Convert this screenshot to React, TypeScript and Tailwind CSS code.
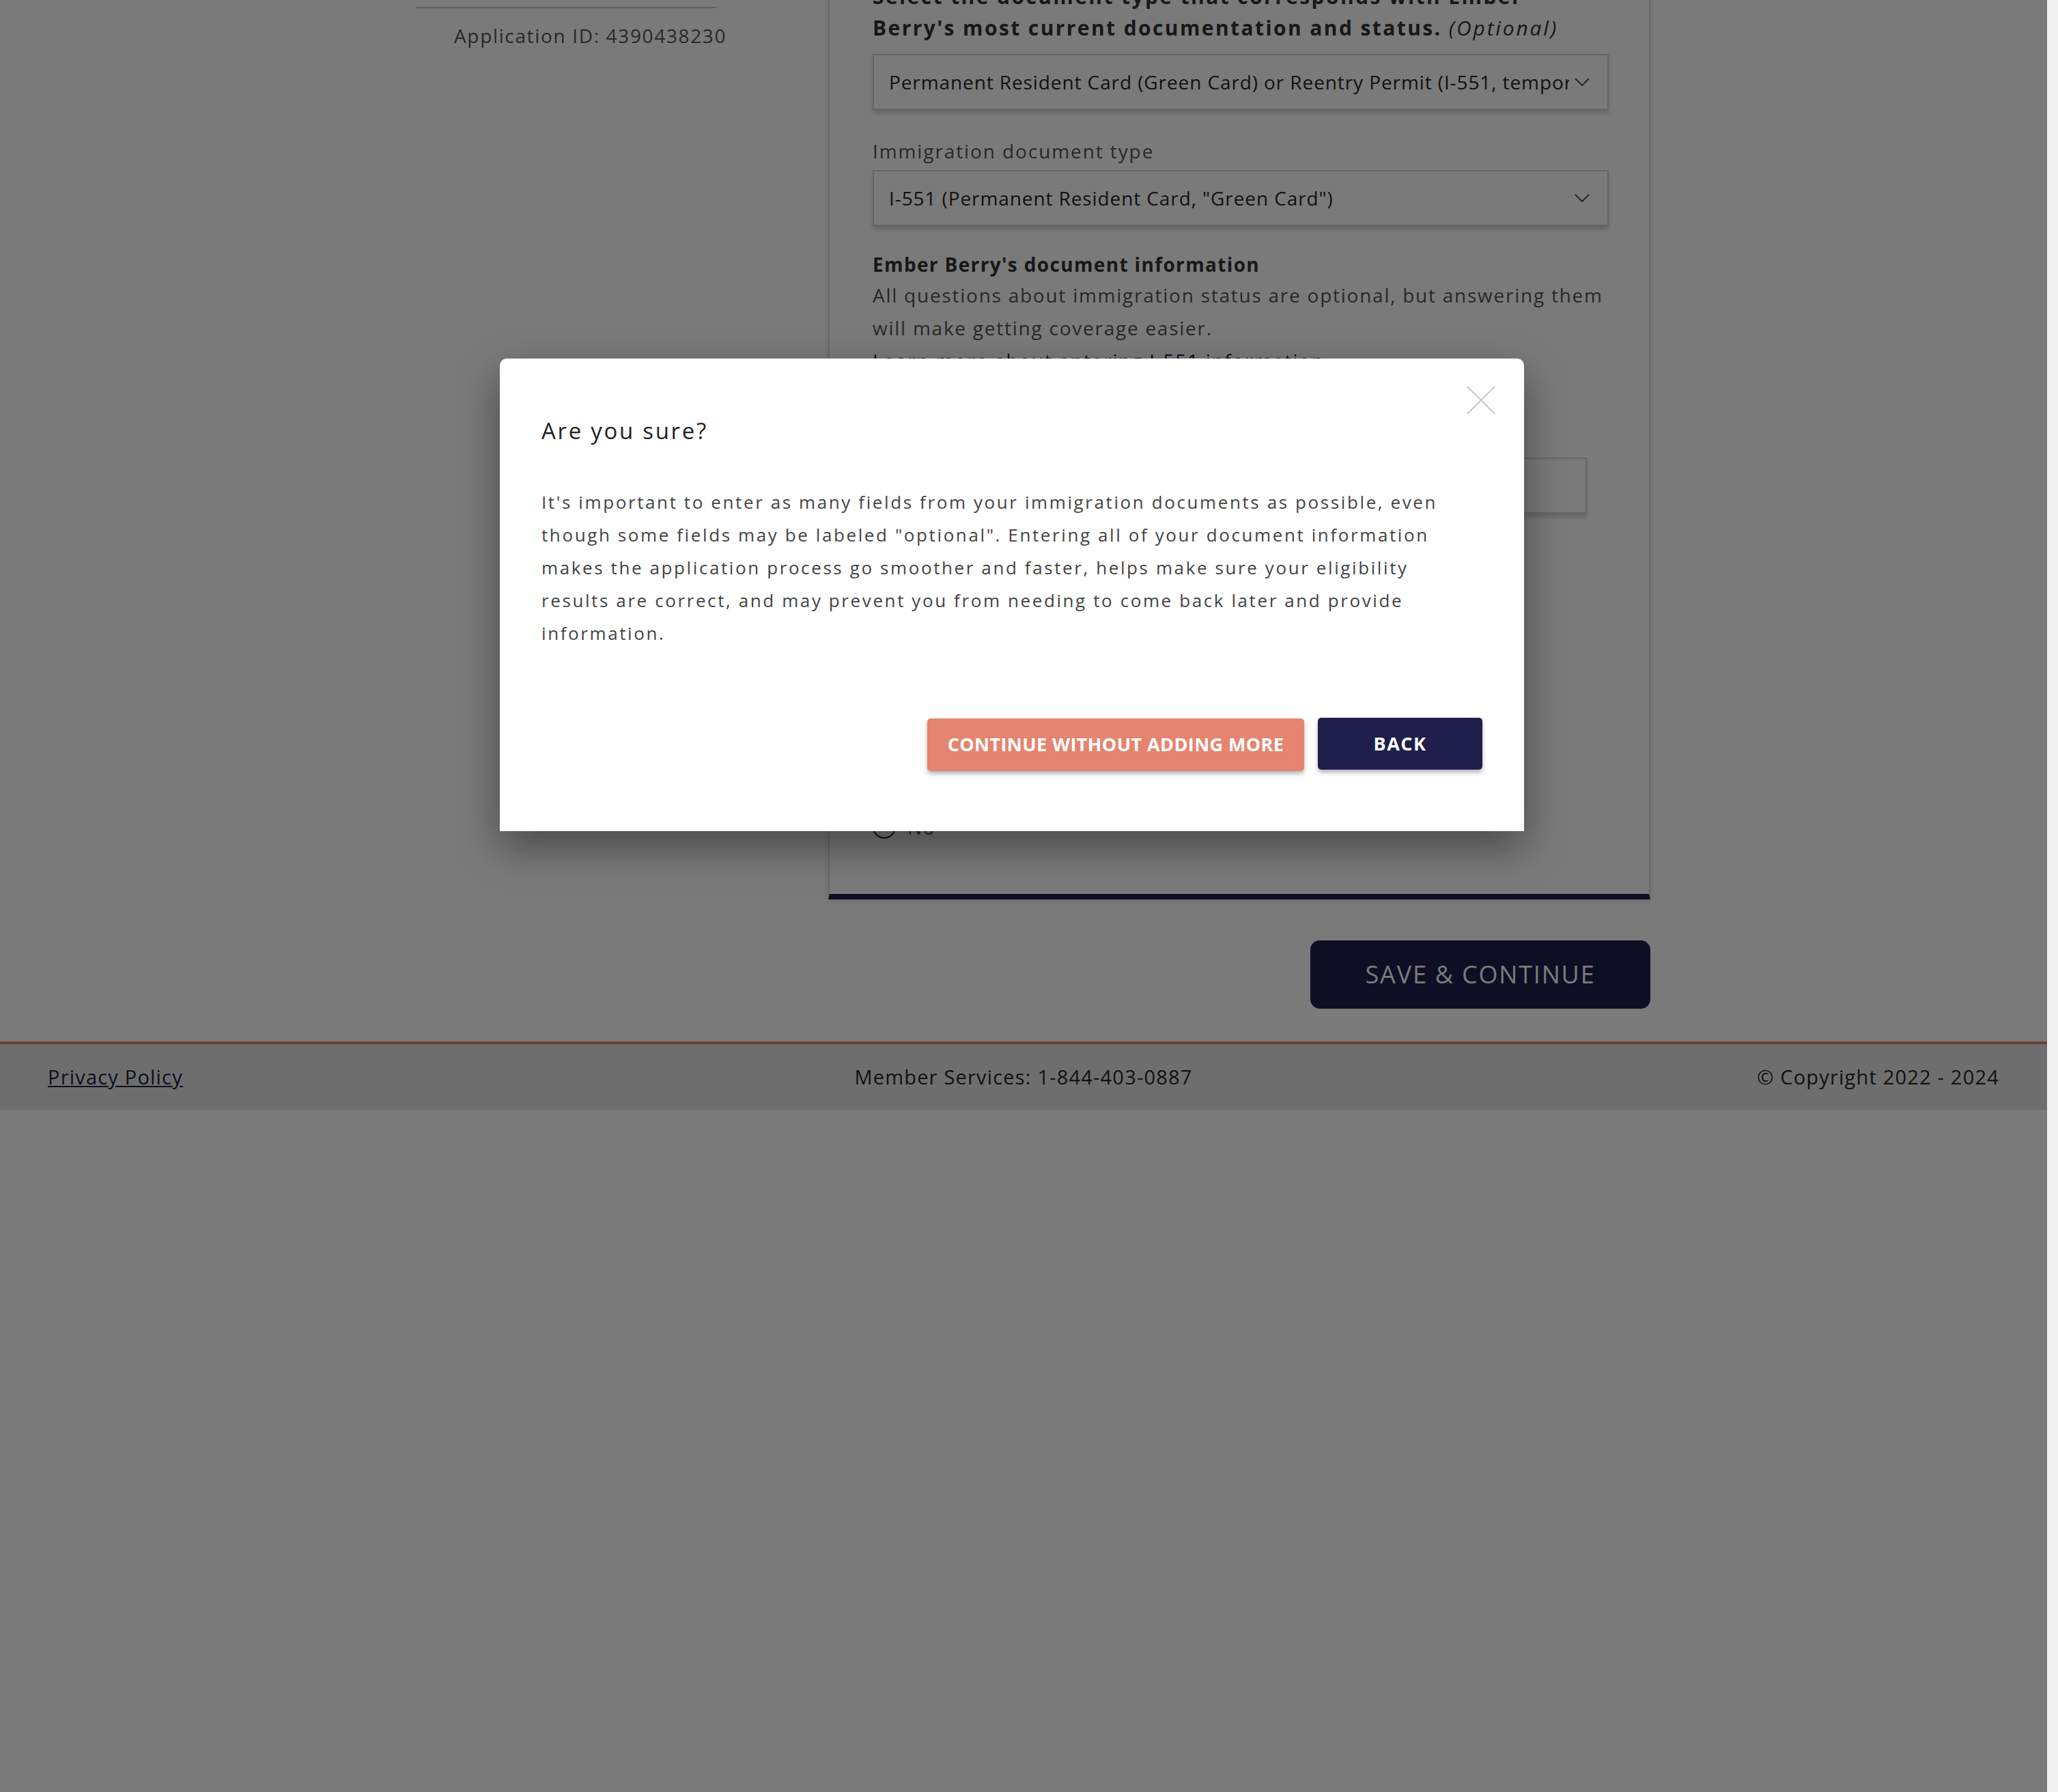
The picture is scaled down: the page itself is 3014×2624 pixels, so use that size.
import React from "react";

const Chevron = () => (
  <svg width="22" height="12" viewBox="0 0 22 12" fill="none" className="shrink-0">
    <polyline points="1,1 11,11 21,1" stroke="#555" strokeWidth="2" />
  </svg>
);

function SelectBox({ value }: { value: string }) {
  return (
    <div className="flex h-[82px] w-full items-center border-2 border-[#d6d6d6] bg-white pl-[22px] pr-[26px] shadow-[0_5px_6px_rgba(0,0,0,0.16)]">
      <div className="flex-1 overflow-hidden whitespace-nowrap text-[28px] tracking-[0.9px] text-[#262626]">{value}</div>
      <div className="pl-[8px]">
        <Chevron />
      </div>
    </div>
  );
}

function Card() {
  return (
    <div className="w-[1204px] border-x-2 border-b-[8px] border-x-[#dcdcdc] border-b-[#1f1e4b] bg-white pb-[74px] pl-[63px] pr-[59px] pt-[32px] shadow-[0_2px_8px_rgba(0,0,0,0.12)]">
      <h2 className="text-[30px] font-bold leading-[46px] tracking-[2.4px] text-[#333]">
        Select the document type that corresponds with Ember
        <br />
        Berry's most current documentation and status.{" "}
        <span className="font-normal italic tracking-[2.8px]">(Optional)</span>
      </h2>
      <div className="mt-[15px]">
        <SelectBox value="Permanent Resident Card (Green Card) or Reentry Permit (I-551, temporary I-551 stamp)" />
      </div>
      <div className="mt-[36px] text-[28px] leading-[48px] tracking-[1.9px] text-[#555]">Immigration document type</div>
      <div className="mt-[4px]">
        <SelectBox value={'I-551 (Permanent Resident Card, "Green Card")'} />
      </div>
      <div className="mt-[35px] text-[28px] font-bold leading-[42px] tracking-[1.35px] text-[#333]">
        Ember Berry's document information
      </div>
      <p className="text-[28px] leading-[48px] tracking-[1.75px] text-[#555]">
        All questions about immigration status are optional, but answering them will make getting coverage easier.
      </p>
      <a className="block text-[28px] leading-[48px] tracking-[1.75px] text-[#1f1e4b] underline">
        Learn more about entering I-551 information
      </a>
      <div className="mt-[50px] text-[28px] leading-[48px] tracking-[1.75px] text-[#555]">Alien number</div>
      <div className="mt-[20px] h-[82px] w-[1046px] border-2 border-[#d6d6d6] bg-white shadow-[0_5px_6px_rgba(0,0,0,0.16)]" />
      <div className="mt-[363px] flex h-[48px] items-center gap-[17px]">
        <span className="h-[34px] w-[34px] rounded-full border-2 border-[#1f1e4b]" />
        <span className="text-[28px] tracking-[1.75px] text-[#555]">Yes</span>
      </div>
      <div className="mt-[24px] flex h-[48px] items-center gap-[17px]">
        <span className="h-[34px] w-[34px] rounded-full border-2 border-[#1f1e4b]" />
        <span className="text-[28px] tracking-[1.75px] text-[#555]">No</span>
      </div>
    </div>
  );
}

function Page() {
  return (
    <div className="flex flex-col">
      <div className="ml-[609px] -mt-[60px] flex w-[1808px] flex-col">
        <div className="flex items-start gap-[164px]">
          <aside className="w-[440px] pt-[70px]">
            <div className="h-[2px] bg-[#cccccc]" />
            <div className="mt-[20px] whitespace-nowrap pl-[56px] text-[28px] leading-[40px] tracking-[1.65px] text-[#555]">
              Application ID: 4390438230
            </div>
          </aside>
          <Card />
        </div>
        <div className="mt-[60px] flex justify-end">
          <button className="flex h-[100px] w-[498px] items-center justify-center rounded-[14px] bg-[#1f1e4b] text-[36px] tracking-[1.8px] text-white">
            SAVE &amp; CONTINUE
          </button>
        </div>
      </div>
      <footer className="mt-[48px] grid h-[100px] grid-cols-3 items-center border-t-4 border-[#e5846f] bg-[#e5e5e5] px-[70px] text-[29px] tracking-[1.2px] text-[#262626]">
        <a className="justify-self-start text-[#1f1e4b] underline">Privacy Policy</a>
        <span className="justify-self-center">Member Services: 1-844-403-0887</span>
        <span className="justify-self-end">© Copyright 2022 - 2024</span>
      </footer>
    </div>
  );
}

function Modal() {
  return (
    <div className="absolute inset-0 bg-black/[0.52]">
      <div className="relative ml-[732px] mt-[525px] h-[692px] w-[1500px] rounded-t-[10px] bg-white px-[61px] pt-[84px] shadow-[0_24px_60px_rgba(0,0,0,0.4)]">
        <button className="absolute right-[42px] top-[40px] h-[42px] w-[42px]">
          <svg viewBox="0 0 42 42" width="42" height="42">
            <line x1="1" y1="1" x2="41" y2="41" stroke="#c4c8cc" strokeWidth="2" />
            <line x1="41" y1="1" x2="1" y2="41" stroke="#c4c8cc" strokeWidth="2" />
          </svg>
        </button>
        <h3 className="text-[33px] leading-[44px] tracking-[2.7px] text-[#222]">Are you sure?</h3>
        <p className="mt-[58px] whitespace-nowrap text-[26px] leading-[48px] tracking-[2.6px] text-[#444]">
          It's important to enter as many fields from your immigration documents as possible, even
          <br />
          though some fields may be labeled "optional". Entering all of your document information
          <br />
          makes the application process go smoother and faster, helps make sure your eligibility
          <br />
          results are correct, and may prevent you from needing to come back later and provide
          <br />
          information.
        </p>
        <div className="mt-[101px] flex justify-end gap-[20px]">
          <button className="h-[77px] w-[552px] rounded-[5px] bg-[#e5846f] text-[27px] font-bold tracking-[0.4px] text-white shadow-[0_4px_6px_rgba(0,0,0,0.3)]">
            CONTINUE WITHOUT ADDING MORE
          </button>
          <button className="-mt-[1px] h-[76px] w-[241px] rounded-[5px] bg-[#201e4b] text-[27px] font-bold tracking-[1.5px] text-white shadow-[0_4px_6px_rgba(0,0,0,0.3)]">
            BACK
          </button>
        </div>
      </div>
    </div>
  );
}

export default function App() {
  return (
    <div className="flex h-[2624px] w-full overflow-hidden bg-white font-['Open_Sans',sans-serif]">
      <div className="relative flex-1 overflow-hidden">
        <Page />
        <Modal />
      </div>
      <div className="w-[16px] shrink-0 bg-[#f1f1f1]" />
    </div>
  );
}
